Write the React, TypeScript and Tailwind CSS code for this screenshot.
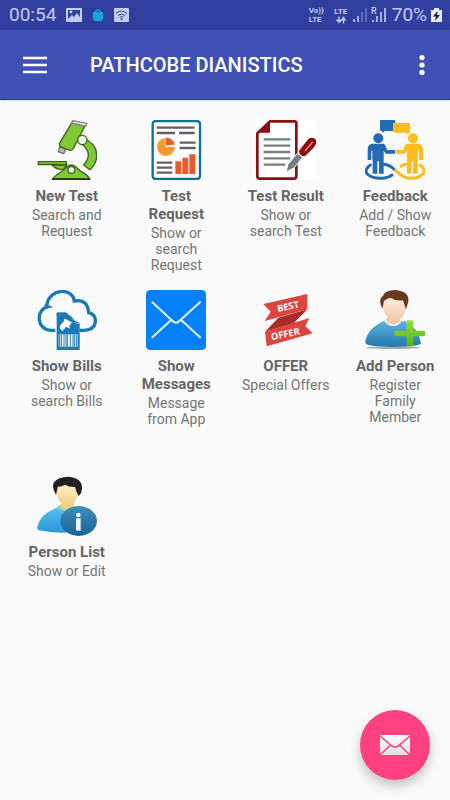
import type { ReactNode } from "react";

type Item = {
  title: string;
  text: string;
  icon: ReactNode;
};

const Icon = ({ children }: { children: ReactNode }) => (
  <svg viewBox="48 30 180 180" className="size-[60px] shrink-0" aria-hidden="true">
    {children}
  </svg>
);

const Microscope = () => (
  <Icon>
    <g stroke="#3c661e" strokeWidth="4" strokeLinejoin="round">
      <path
        fill="#82c832"
        d="M189 84q40 20 38 55q-2 26-21 40l-18-14q12-12 14-28q1-18-19-34z"
      />
      <path fill="#82c832" d="M93 165h45l-12 14q-20 0-33-14z" />
      <path fill="#82c832" d="M94 208q6-10 26-22l18-15q13-12 27 0l16 14q20 10 25 23z" />
      <path fill="#82c832" d="M52 155h84v9h-84z" />
      <path fill="#b9c0b9" d="M116 110l18 8l-6 13l-16-6z" stroke="#6d756d" />
      <path fill="#82c832" d="M153 38l38 11l-33 65q-5 9-14 6l-23-9q-8-4-4-14z" />
      <path fill="#dfe4df" d="M155 32l43 8l-4 9l-43-10z" stroke="#7f857f" />
      <circle cx="184" cy="90" r="14" fill="#eef3ea" />
      <circle cx="151" cy="180" r="10" fill="#fff" />
    </g>
    <path d="M93 207h115" stroke="#222" strokeWidth="4" />
    <path d="M52 163h56" stroke="#31551c" strokeWidth="3" />
  </Icon>
);

const Report = () => (
  <Icon>
    <rect x="68" y="33" width="142" height="174" rx="9" fill="#fff" stroke="#12708f" strokeWidth="7" />
    <path
      d="M80 53h114M80 69h55M147 69h47M149 98h48M149 114h48M80 158h47M80 173h47M80 188h47"
      stroke="#65616a"
      strokeWidth="7"
    />
    <path d="M107 111V84a27 27 0 1 0 28 27z" fill="#f79a33" />
    <path d="M107 107l-2-25a28 28 0 0 1 31 23z" fill="#e85b2b" stroke="#fff" strokeWidth="2" />
    <path d="M136 154h18v38h-18zM157 143h18v49h-18zM178 133h18v59h-18z" fill="#e85b2b" />
  </Icon>
);

const Result = () => (
  <Icon>
    <rect x="48" y="30" width="180" height="180" fill="#fff" />
    <path
      d="M90 34h73q6 0 6 6v159q0 7-7 7H59q-7 0-7-7V70z"
      fill="#fff"
      stroke="#8c0e13"
      strokeWidth="8"
    />
    <path d="M90 33v35H52z" fill="#8c0e13" />
    <path d="M71 88h80M71 107h80M71 126h80M71 145h80M71 164h65" stroke="#71817e" strokeWidth="7" />
    <path
      d="M138 186l6-23l28-33l16 12l-26 32z"
      fill="#71817e"
      stroke="#fff"
      strokeWidth="3"
    />
    <path
      d="M177 122l28-35q7-6 15-3q11 4 9 15l-6 12l-24 24q-7 6-14 2q-9-5-8-15z"
      fill="#8c0e13"
    />
    <path d="M196 122l21-25" stroke="#ee8f83" strokeWidth="4" strokeLinecap="round" />
  </Icon>
);

const Feedback = () => (
  <Icon>
    <g fill="none" strokeWidth="9" strokeLinecap="round">
      <path d="M64 165q-22 16-7 29q18 14 50 10q14-2 22-9" stroke="#236bb5" />
      <path d="M106 163q14 1 32 17" stroke="#236bb5" />
      <path d="M213 165q22 16 5 30q-14 12-42 9q-18-3-36-23" stroke="#fcbd1a" />
      <path d="M171 163q-7 0-15 6" stroke="#fcbd1a" />
    </g>
    <path
      d="M70 101h33q7 1 11 19h24v11h-28l-6-9v69H90v-37h-5v37H71v-43h-1v-26h-3v28H56v-31q0-17 14-18z"
      fill="#236bb5"
    />
    <path
      d="M207 101h-33q-7 1-11 19h-23v11h28l6-9v69h14v-37h4v37h14v-43h1v-26h3v28h12v-31q0-17-15-18z"
      fill="#fcbd1a"
    />
    <circle cx="88" cy="85" r="15" fill="#236bb5" />
    <circle cx="192" cy="85" r="15" fill="#fcbd1a" />
    <path d="M97 30h38q4 0 4 4v5h-7v24h-24l-8 6v-6h-3q-4 0-4-4V34q0-4 4-4z" fill="#236bb5" />
    <path d="M136 39h43q4 0 4 4v21q0 4-4 4v7l-8-7h-35q-4 0-4-4V43q0-4 4-4z" fill="#fcbd1a" />
  </Icon>
);

const Bills = () => (
  <Icon>
    <path
      d="M103 151H89C45 148 44 88 81 80Q72 76 78 73C85 26 154 21 160 63Q199 55 203 98Q225 103 223 127Q219 151 188 151H176"
      fill="none"
      stroke="#1b79b5"
      strokeWidth="10"
    />
    <path d="M107 98l27-1l42 33v80h-69z" fill="#1b79b5" />
    <path
      d="M112 100q18 2 28 9q16 9 34 14l-1 8q-11-1-18-5l-7 6q-4 5-2 14l-10-6l-12 13l-8-8q0-11 11-18l4-12q-5-9-19-15z"
      fill="#fbfcfd"
    />
    <path d="M107 98q29-4 48 20l21 12l-24-3q-17-12-45-18z" fill="#1b79b5" />
    <path d="M113 163h57v37h-57z" fill="#fff" />
    <path
      d="M116 163v37M121 163v37M129 163v37M135 163v37M139 163v37M148 163v37M156 163v37M161 163v37M167 163v37"
      stroke="#1b79b5"
      strokeWidth="3"
    />
  </Icon>
);

const Messages = () => (
  <Icon>
    <rect x="48" y="30" width="180" height="180" rx="13" fill="#0580fc" />
    <path
      d="M67 67l61 56q10 10 20 0l62-56M67 172l54-50M210 172l-54-50"
      fill="none"
      stroke="#dff4ff"
      strokeWidth="6"
      strokeLinecap="round"
    />
  </Icon>
);

const Offer = () => (
  <Icon>
    <path d="M202 88l-41 42l-86 25l40-42z" fill="#aa2c2a" />
    <path d="M70 72l132-30v46L74 123l18-28z" fill="#dc4440" />
    <path d="M75 155l133-41l-12 25l22 21l-138 39z" fill="#dc4440" />
    <g
      fill="#fff"
      fontFamily="Open Sans, sans-serif"
      fontWeight="700"
      fontSize="28"
      textAnchor="middle"
    >
      <text x="146" y="89" transform="rotate(-12 146 89)">BEST</text>
      <text x="138" y="172" transform="rotate(-12 138 172)">OFFER</text>
    </g>
  </Icon>
);

const AddPerson = () => (
  <Icon>
    <defs>
      <linearGradient id="addShirt" x2="0" y2="1">
        <stop stopColor="#5db4df" />
        <stop offset="1" stopColor="#2378ac" />
      </linearGradient>
      <linearGradient id="addFace" x2="0" y2="1">
        <stop stopColor="#fff0df" />
        <stop offset="1" stopColor="#efcaa8" />
      </linearGradient>
      <linearGradient id="addPlus" x2="0" y2="1">
        <stop stopColor="#96df3e" />
        <stop offset="1" stopColor="#4eb510" />
      </linearGradient>
    </defs>
    <ellipse cx="133" cy="203" rx="81" ry="4" fill="#aaa" />
    <path d="M104 123q27 8 63 0q42 21 49 66q0 11-83 12q-82-1-84-12q2-41 55-66z" fill="url(#addShirt)" />
    <path d="M104 121q30-12 55 0q-7 18-27 18q-20-1-28-18z" fill="#dbeaf0" />
    <path d="M112 113h40v10q-19 19-40 0z" fill="#edc9a8" />
    <path d="M100 65q0-19 34-19q38 0 39 22q-2 51-36 54q-31-2-37-57z" fill="url(#addFace)" />
    <path
      d="M101 86q-16-27 1-39q6-16 37-17q43 4 39 35l-7 23q-4-10-9-27q-21 3-38-8q-19 5-20 13z"
      fill="#663820"
    />
    <path
      d="M173 124q0-3 4-3h12q4 0 4 4v27h31q4 0 4 4v9q0 4-4 4h-31v26q0 4-4 4h-12q-4 0-4-4v-26h-32q-5 0-5-4v-9q0-4 5-4h32z"
      fill="url(#addPlus)"
    />
  </Icon>
);

const PersonList = () => (
  <Icon>
    <defs>
      <linearGradient id="listShirt" x2="0" y2="1">
        <stop stopColor="#56c0ec" />
        <stop offset="1" stopColor="#2799d9" />
      </linearGradient>
      <linearGradient id="listFace" x2="0" y2="1">
        <stop stopColor="#fff2cb" />
        <stop offset="1" stopColor="#efcf80" />
      </linearGradient>
      <linearGradient id="listInfo" x2="0" y2="1">
        <stop stopColor="#408fba" />
        <stop offset="1" stopColor="#176498" />
      </linearGradient>
    </defs>
    <path d="M104 127q24 8 47-4l39 18l-25 56q-54 8-110-4q-8-1-6-11q9-37 55-55z" fill="url(#listShirt)" />
    <path d="M104 127l10-10h40l7 8q-21 19-57 2z" fill="#91d8ba" />
    <path d="M121 109h38v13q-21 18-40 0z" fill="#efd285" />
    <path d="M103 68q0-18 34-18t35 20q-2 43-31 50q-29-1-38-52z" fill="url(#listFace)" />
    <path
      d="M105 86q-13-22-7-36q12-18 45-18q41 4 40 35q0 14-10 23q-7-11-11-27q-18 1-30-7q-17 9-21 5z"
      fill="#222020"
    />
    <ellipse cx="173" cy="165" rx="55" ry="45" fill="url(#listInfo)" />
    <path d="M165 157h14v37h-14z" fill="#eef8fb" />
    <circle cx="172" cy="147" r="7" fill="#eef8fb" />
  </Icon>
);

const items: Item[] = [
  { title: "New Test", text: "Search and Request", icon: <Microscope /> },
  { title: "Test Request", text: "Show or search Request", icon: <Report /> },
  { title: "Test Result", text: "Show or search Test", icon: <Result /> },
  { title: "Feedback", text: "Add / Show Feedback", icon: <Feedback /> },
  { title: "Show Bills", text: "Show or search Bills", icon: <Bills /> },
  { title: "Show Messages", text: "Message from App", icon: <Messages /> },
  { title: "OFFER", text: "Special Offers", icon: <Offer /> },
  { title: "Add Person", text: "Register Family Member", icon: <AddPerson /> },
  { title: "Person List", text: "Show or Edit", icon: <PersonList /> },
];

const StatusBar = () => (
  <div className="flex h-[30px] items-center justify-between bg-[#303f9f] pr-2 pl-[9px] text-[#c5cbf0]">
    <div className="flex items-center gap-2.5">
      <span className="text-[19px] leading-6">00:54</span>
      <svg viewBox="0 0 16 14" className="h-3.5 w-4">
        <path
          fill="currentColor"
          fillRule="evenodd"
          d="M1 0h14q1 0 1 1v12q0 1-1 1H1q-1 0-1-1V1q0-1 1-1zM2 2v9l4-4l2 2l3-4l3 4V2z"
        />
        <circle cx="5" cy="4" r="1.4" fill="currentColor" />
      </svg>
      <svg viewBox="0 0 12 12" className="size-3">
        <path d="M3.500 4V2.500q2.500-3 5 0V4" fill="none" stroke="#16a5df" strokeWidth="1.300" />
        <path d="M1 3h10v6q0 3-3 3H4q-3 0-3-3z" fill="#16a5df" />
      </svg>
      <svg viewBox="0 0 15 14" className="h-3.5 w-[15px]">
        <rect width="15" height="14" rx="1" fill="currentColor" />
        <path
          d="M2 5.500q5.500-5 11 0M4 7.500q3.500-3 7 0M5.700 9.300q1.800-1.500 3.600 0"
          fill="none"
          stroke="#303f9f"
          strokeWidth="1"
        />
        <circle cx="7.500" cy="11" r="1" fill="#303f9f" />
      </svg>
    </div>
    <div className="flex items-center gap-1">
      <span className="flex w-4 flex-col text-[8px] leading-[9px] font-bold">
        <span>Vo))</span>
        <span>LTE</span>
      </span>
      <span className="ml-1 flex w-4 flex-col items-center text-[8px] leading-[9px] font-bold">
        <span>LTE</span>
        <svg viewBox="0 0 10 7" className="h-2 w-2.5">
          <path
            d="M3 0v5M.5 3L3 6l2.500-3M7.500 7V2M5.500 4l2-3l2 3"
            fill="none"
            stroke="currentColor"
            strokeWidth="1.400"
          />
        </svg>
      </span>
      <svg viewBox="0 0 14 14" className="size-3.5">
        <path d="M1 14v-3M5 14V8" stroke="currentColor" strokeWidth="1.600" />
        <path d="M9 14V4M13 14V0" stroke="#6c78c2" strokeWidth="1.600" />
      </svg>
      <svg viewBox="0 0 15 16" className="h-4 w-[15px]">
        <text x="0" y="7" fontSize="9" fontWeight="500" fill="currentColor">R</text>
        <path d="M2 15v-2M6 15V9M10 15V5M14 15V1" stroke="currentColor" strokeWidth="1.600" />
      </svg>
      <span className="ml-0.5 text-[19px] leading-6">70%</span>
      <svg viewBox="0 0 11 14" className="h-3.5 w-[11px]">
        <path d="M3 0h5v2h3v12H0V2h3z" fill="#e8eaff" />
        <path d="M6.500 3L2 8.500h3L4 13l5-6H6z" fill="#171b38" />
      </svg>
    </div>
  </div>
);

const App = () => {
  return (
    <div className="min-h-screen bg-[#fafafa] font-[Roboto,sans-serif]">
      <StatusBar />
      <header className="flex h-[70px] items-center border-b border-[#263b96] bg-[#3f51b5] pr-4 pl-[23px] text-white shadow-sm">
        <button type="button" aria-label="Open menu" className="w-6">
          <svg viewBox="0 0 24 18" className="h-[18px] w-6">
            <path d="M0 2h24M0 9h24M0 16h24" stroke="currentColor" strokeWidth="2.600" />
          </svg>
        </button>
        <h1 className="ml-[43px] flex-1 text-xl font-medium">PATHCOBE DIANISTICS</h1>
        <button type="button" aria-label="More options" className="flex w-6 justify-center">
          <svg viewBox="0 0 6 20" className="h-5 w-1.5" fill="currentColor">
            <circle cx="3" cy="2.600" r="2.600" />
            <circle cx="3" cy="10" r="2.600" />
            <circle cx="3" cy="17.400" r="2.600" />
          </svg>
        </button>
      </header>

      <main className="grid grid-cols-4 grid-rows-[170px_186px_auto] items-start pt-5 pl-3">
        {items.map((item) => (
          <button
            type="button"
            key={item.title}
            className="flex flex-col items-center px-2.5 text-center"
          >
            {item.icon}
            <span className="mt-[7px] px-1 text-[15px] leading-[18px] font-bold text-[#666666]">
              {item.title}
            </span>
            <span className="mt-0.5 text-sm leading-4 text-[#757575]">{item.text}</span>
          </button>
        ))}
      </main>

      <button
        type="button"
        aria-label="Send message"
        className="fixed right-5 bottom-5 flex size-[70px] items-center justify-center rounded-full bg-[#ff4081] shadow-[0_6px_12px_rgba(0,0,0,0.22)]"
      >
        <svg viewBox="0 0 30 20" className="h-5 w-[30px]">
          <defs>
            <linearGradient id="mail" x2="0" y2="1">
              <stop stopColor="#ffffff" />
              <stop offset="1" stopColor="#dedede" />
            </linearGradient>
          </defs>
          <rect width="30" height="20" rx="1" fill="url(#mail)" />
          <path
            d="M0 1l12 10q3 2 6 0L30 1M0 20l10.500-10M30 20L19.500 10"
            fill="none"
            stroke="#ff4081"
            strokeWidth="1.600"
          />
        </svg>
      </button>
    </div>
  );
};

export default App;
